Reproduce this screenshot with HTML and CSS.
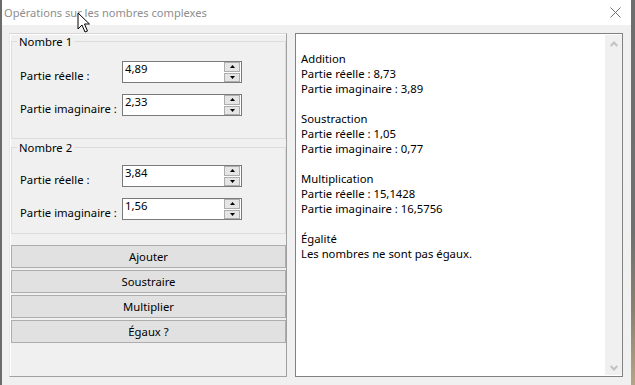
FILE: index.html
```html
<!DOCTYPE html>
<html lang="fr">
<head>
<meta charset="utf-8">
<title>Opérations sur les nombres complexes</title>
<link rel="stylesheet" href="styles.css">
</head>
<body>
<div class="window">
  <div class="frame-left"></div>
  <div class="main">
    <div class="titlebar">
      <span class="title">Opérations sur les nombres complexes</span>
      <svg class="close" width="11" height="11" viewBox="0 0 11 11"><path d="M0.5 0.5 L10.5 10.5 M10.5 0.5 L0.5 10.5" stroke="#6f6f6f" stroke-width="1" fill="none"/></svg>
    </div>
    <div class="client">
      <div class="panel">
        <fieldset class="group g1">
          <legend>Nombre 1</legend>
          <div class="row">
            <span class="lbl">Partie réelle :</span>
            <div class="spin"><span class="val">4,89</span><div class="spin-btns"><span class="sb"><svg width="5" height="3" viewBox="0 0 5 3"><polygon points="0,3 2.5,0 5,3" fill="#000"/></svg></span><span class="sb"><svg width="5" height="3" viewBox="0 0 5 3"><polygon points="0,0 5,0 2.5,3" fill="#000"/></svg></span></div></div>
          </div>
          <div class="row">
            <span class="lbl">Partie imaginaire :</span>
            <div class="spin"><span class="val">2,33</span><div class="spin-btns"><span class="sb"><svg width="5" height="3" viewBox="0 0 5 3"><polygon points="0,3 2.5,0 5,3" fill="#000"/></svg></span><span class="sb"><svg width="5" height="3" viewBox="0 0 5 3"><polygon points="0,0 5,0 2.5,3" fill="#000"/></svg></span></div></div>
          </div>
        </fieldset>
        <fieldset class="group g2">
          <legend>Nombre 2</legend>
          <div class="row">
            <span class="lbl">Partie réelle :</span>
            <div class="spin"><span class="val">3,84</span><div class="spin-btns"><span class="sb"><svg width="5" height="3" viewBox="0 0 5 3"><polygon points="0,3 2.5,0 5,3" fill="#000"/></svg></span><span class="sb"><svg width="5" height="3" viewBox="0 0 5 3"><polygon points="0,0 5,0 2.5,3" fill="#000"/></svg></span></div></div>
          </div>
          <div class="row">
            <span class="lbl">Partie imaginaire :</span>
            <div class="spin"><span class="val">1,56</span><div class="spin-btns"><span class="sb"><svg width="5" height="3" viewBox="0 0 5 3"><polygon points="0,3 2.5,0 5,3" fill="#000"/></svg></span><span class="sb"><svg width="5" height="3" viewBox="0 0 5 3"><polygon points="0,0 5,0 2.5,3" fill="#000"/></svg></span></div></div>
          </div>
        </fieldset>
        <div class="buttons">
          <button class="btn">Ajouter</button>
          <button class="btn">Soustraire</button>
          <button class="btn">Multiplier</button>
          <button class="btn">Égaux ?</button>
        </div>
      </div>
      <div class="output">
        <div class="text">
          <div class="line">Addition</div>
          <div class="line">Partie réelle : 8,73</div>
          <div class="line">Partie imaginaire : 3,89</div>
          <div class="line"></div>
          <div class="line">Soustraction</div>
          <div class="line">Partie réelle : 1,05</div>
          <div class="line">Partie imaginaire : 0,77</div>
          <div class="line"></div>
          <div class="line">Multiplication</div>
          <div class="line">Partie réelle : 15,1428</div>
          <div class="line">Partie imaginaire : 16,5756</div>
          <div class="line"></div>
          <div class="line">Égalité</div>
          <div class="line">Les nombres ne sont pas égaux.</div>
        </div>
        <div class="scrollbar">
          <svg width="8" height="6" viewBox="0 0 8 6"><path d="M0.7 5 L4 1.5 L7.3 5" stroke="#c2c2c2" stroke-width="2" fill="none"/></svg>
          <svg width="8" height="6" viewBox="0 0 8 6"><path d="M0.7 1 L4 4.5 L7.3 1" stroke="#c2c2c2" stroke-width="2" fill="none"/></svg>
        </div>
      </div>
    </div>
  </div>
  <div class="desk"></div>
  <svg class="cursor" width="14" height="21" viewBox="0 0 14 21"><path d="M1 1 L1 17 L5 13 L8 20 L10.5 19 L7.5 12 L12.5 12 Z" fill="#fff" stroke="#000" stroke-width="1" stroke-linejoin="miter"/></svg>
</div>
</body>
</html>
```

FILE: styles.css
```css
* { box-sizing: border-box; }

html, body {
  margin: 0;
  padding: 0;
}

body {
  width: 635px;
  height: 385px;
  overflow: hidden;
  font-family: "Noto Sans", "Open Sans", sans-serif;
  font-size: 11.3px;
  color: #000;
}

.window {
  position: relative;
  display: flex;
  width: 635px;
  height: 385px;
  background: #f0f0f0;
}

.frame-left {
  width: 2px;
  background: #6b6b6b;
}

.desk {
  width: 4px;
  background: linear-gradient(#6e6e6e 0%, #707070 60%, #8a8070 80%, #b7a483 100%);
}

.main {
  width: 629px;
  display: flex;
  flex-direction: column;
}

.titlebar {
  height: 25px;
  background: #fff;
  display: flex;
  align-items: center;
  padding-left: 2px;
}

.title {
  color: #8e8e8e;
  line-height: 15px;
  font-size: 11.1px;
}

.close {
  margin-left: auto;
  margin-right: 10px;
  margin-top: -1px;
}

.client {
  display: flex;
  gap: 8px;
  padding: 8px 8px 0 7px;
  height: 360px;
}

.panel {
  width: 278px;
  height: 344px;
  border: 1px solid;
  border-color: #d6d6d6 #a0a0a0 #a0a0a0 #e6e6e6;
  box-shadow: inset 1px 1px 0 #fff;
  padding: 0 0 0 1px;
  display: flex;
  flex-direction: column;
}

.group {
  margin: 0;
  border: 1px solid #dcdcdc;
  padding: 0;
  min-width: 0;
}

.group legend {
  margin-left: 5px;
  padding: 0 2px;
  line-height: 15px;
  font-size: 11.3px;
}

.g1 {
  margin-top: 0;
  padding-top: 12px;
  padding-bottom: 22px;
}

.g2 {
  margin-top: 1px;
  padding-top: 10px;
  padding-bottom: 13px;
}

.row {
  display: flex;
  align-items: flex-start;
  height: 22px;
  padding-left: 8px;
}

.row + .row {
  margin-top: 11px;
}

.lbl {
  width: 102px;
  line-height: 15px;
  margin-top: 7px;
  white-space: nowrap;
}

.spin {
  width: 120px;
  height: 22px;
  border: 1px solid #7a7a7a;
  background: #fff;
  display: flex;
  align-items: flex-start;
}

.val {
  flex: 1;
  padding-left: 2px;
  line-height: 9px;
  padding-top: 2px;
}

.spin-btns {
  width: 16px;
  margin-right: 1px;
  display: flex;
  flex-direction: column;
  gap: 1px;
}

.sb {
  height: 9.5px;
  border: 1px solid #adadad;
  background: #e5e5e5;
  display: flex;
  align-items: center;
  justify-content: center;
}

.sb svg {
  display: block;
}

.buttons {
  margin-top: 11px;
  display: flex;
  flex-direction: column;
  gap: 2px;
}

.btn {
  width: 275px;
  height: 23px;
  border: 1px solid #adadad;
  background: #e1e1e1;
  font-family: inherit;
  font-size: 11.3px;
  color: #000;
  padding: 0;
  line-height: 15px;
}

.output {
  width: 328px;
  height: 344px;
  border: 1px solid #828282;
  background: #fff;
  display: flex;
}

.text {
  flex: 1;
  padding: 17px 0 0 5px;
}

.line {
  height: 15px;
  line-height: 15px;
  white-space: nowrap;
}

.scrollbar {
  width: 17px;
  margin: 1px 0;
  background: #f0f0f0;
  display: flex;
  flex-direction: column;
  justify-content: space-between;
  align-items: center;
  padding: 6px 0 4px 0;
}

.scrollbar svg {
  display: block;
}

.cursor {
  position: absolute;
  left: 77px;
  top: 12px;
}
```
